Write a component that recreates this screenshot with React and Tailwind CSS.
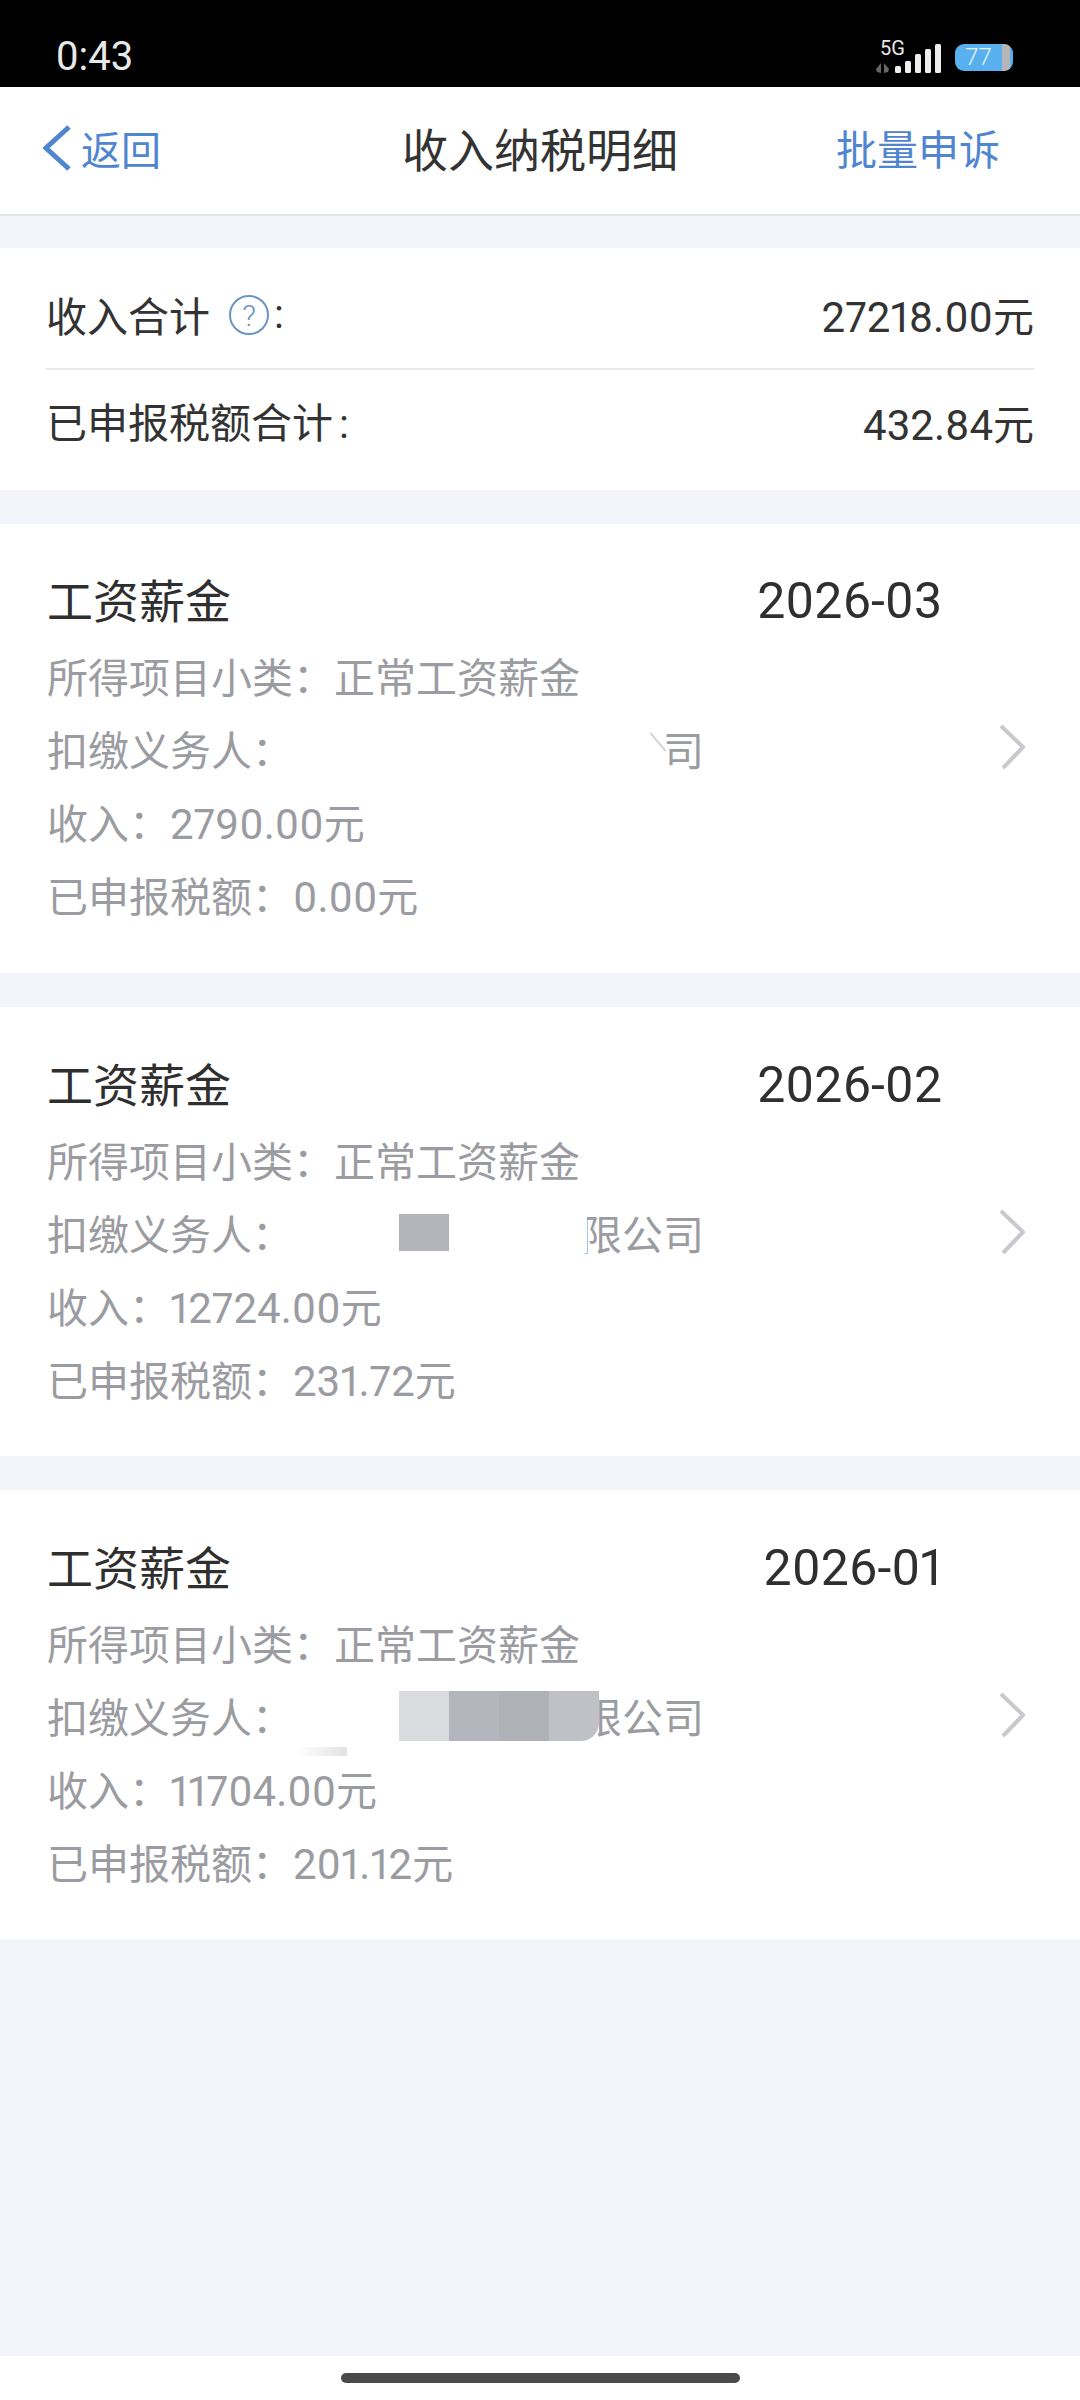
const records = [
  {
    month: '2026-03',
    income: '2790.00',
    tax: '0.00',
    offset: 'pt-[2px]',
    payer: (
      <div className="flex-1 flex items-center">
        <span className="ml-[364px] h-[24px] w-[2px] -translate-y-[7px] -rotate-[40deg] bg-[#d4d4d8]" />
        <span className="ml-[4px]">司</span>
      </div>
    ),
  },
  {
    month: '2026-02',
    income: '12724.00',
    tax: '231.72',
    offset: 'pt-[5px]',
    payer: (
      <div className="flex-1 flex items-center">
        <span className="ml-[106px] h-[37px] w-[50px] -translate-y-[1px] bg-[#b3b4b9]" />
        <span className="relative z-10 ml-[132px] -mr-[6px] h-[40px] w-[6px] bg-white" />
        <span>限公司</span>
      </div>
    ),
  },
  {
    month: '2026-01',
    income: '11704.00',
    tax: '201.12',
    offset: 'pt-[5px]',
    payer: (
      <div className="relative flex-1 flex items-center">
        <span className="absolute left-[4px] top-full w-[50px] h-[9px] bg-gradient-to-r from-white to-[#e2e2e4]" />
        <div className="relative z-10 ml-[106px] flex h-[50px] rounded-br-[18px] overflow-hidden">
          <span className="w-[50px] bg-[#d9dbdf]" />
          <span className="w-[50px] bg-[#b3b6bc]" />
          <span className="w-[50px] bg-[#aeb1b6]" />
          <span className="w-[50px] bg-[#bfc1c6]" />
        </div>
        <span className="-ml-[18px]">限公司</span>
      </div>
    ),
  },
];

const num = "font-['Roboto'] proportional-nums text-[42px] leading-none";

const RecordCard = ({ record }) => (
  <div className={`relative mt-[34px] h-[449px] bg-white pl-[47px] flex items-center ${record.offset}`}>
    <div className="w-[895px]">
      <div className="flex items-center justify-between h-[60px] text-[46px] text-[#2f2f2f]">
        <span>工资薪金</span>
        <span className="pt-[6px] font-['Roboto'] proportional-nums text-[50px]">{record.month}</span>
      </div>
      <div className="mt-[11px] text-[41px] text-[#9b9ca1]">
        <div className="h-[73px] flex items-center">所得项目小类：正常工资薪金</div>
        <div className="h-[73px] flex items-center">
          <span>扣缴义务人：</span>
          {record.payer}
        </div>
        <div className="h-[73px] flex items-center">
          <span>收入：<span className={num}>{record.income}</span>元</span>
        </div>
        <div className="h-[73px] flex items-center">
          <span>已申报税额：<span className={num}>{record.tax}</span>元</span>
        </div>
      </div>
    </div>
    <svg width="27" height="46" viewBox="0 0 27 46" fill="none" className="ml-[57px] -mt-[5px]">
      <path d="M2 2l22 21L4 44" stroke="#c9c9cd" strokeWidth="4" strokeLinejoin="round" />
    </svg>
  </div>
);

export default function App() {
  return (
    <div className="w-[1080px] h-[2400px] flex flex-col bg-[#f4f5fa] font-['Noto_Sans_CJK_SC',sans-serif]">
      {/* Status bar */}
      <div className="h-[87px] bg-black flex items-center justify-between pl-[56px] pr-[67px] pt-[27px] text-white">
        <span className="font-['Roboto'] text-[40px] text-[#e8e8e8]">0:43</span>
        <div className="flex items-center gap-[12px]">
          <div className="relative w-[67px] h-[32px]">
            <span className="absolute left-[4px] -top-[3px] font-['Roboto'] text-[20px] leading-[20px] text-[#e8e8e8]">5G</span>
            <svg width="67" height="32" viewBox="0 0 67 32" className="absolute inset-0">
              <path d="M0 28l5-6v10l-4-1zM8 22l5 6-1 3-4 1z" fill="#666" />
              <rect x="19" y="25" width="6" height="7" rx="1.5" fill="#eee" />
              <rect x="29" y="20" width="6" height="12" rx="1.5" fill="#eee" />
              <rect x="39" y="13" width="6" height="19" rx="1.5" fill="#eee" />
              <rect x="49" y="8" width="6" height="24" rx="1.5" fill="#eee" />
              <rect x="59" y="3" width="6" height="29" rx="1.5" fill="#eee" />
            </svg>
          </div>
          <div className="w-[58px] h-[27px] rounded-[9px] overflow-hidden flex bg-[#59b0ee] pr-[3px]">
            <span className="flex-1 text-center font-['Roboto'] font-light text-[24px] leading-[27px] text-[#e6f4ff]">77</span>
            <span className="w-[8px] bg-[#b5b5b5]" />
          </div>
        </div>
      </div>

      {/* Header */}
      <div className="h-[129px] pb-[6px] bg-white border-b-2 border-[#e3e4e8] flex items-center justify-between pl-[43px] pr-[80px]">
        <div className="w-[201px] flex items-center text-[#4f86cf] text-[40px]">
          <svg width="28" height="46" viewBox="0 0 28 46" fill="none" className="mr-[10px]">
            <path d="M26 2L3 23l23 21" stroke="#4f86cf" strokeWidth="5" />
          </svg>
          <span>返回</span>
        </div>
        <span className="text-[46px] text-[#333333]">收入纳税明细</span>
        <span className="text-[41px] text-[#4f86cf]">批量申诉</span>
      </div>

      {/* Totals */}
      <div className="mt-[32px] h-[242px] bg-white pl-[46px] pr-[46px] text-[41px] text-[#333333]">
        <div className="h-[122px] pt-[14px] border-b-2 border-[#e9e9ec] flex items-center justify-between">
          <div className="flex items-center">
            <span>收入合计</span>
            <span className="ml-[19px] w-[40px] h-[40px] rounded-full border-2 border-[#6b94c4] flex items-center justify-center font-['Roboto'] font-light text-[30px] text-[#6b94c4]">?</span>
            <span className="ml-[5px] font-['Roboto']">:</span>
          </div>
          <span><span className={num}>27218.00</span>元</span>
        </div>
        <div className="h-[120px] pb-[14px] flex items-center justify-between">
          <span>已申报税额合计<span className="ml-[6px] font-['Roboto']">:</span></span>
          <span><span className={num}>432.84</span>元</span>
        </div>
      </div>

      {records.map((record) => (
        <RecordCard key={record.month} record={record} />
      ))}

      <div className="flex-1" />

      {/* Home indicator */}
      <div className="h-[44px] bg-white flex justify-center pt-[17px]">
        <div className="w-[399px] h-[10px] rounded-full bg-[#4a4a4a]" />
      </div>
    </div>
  );
}
